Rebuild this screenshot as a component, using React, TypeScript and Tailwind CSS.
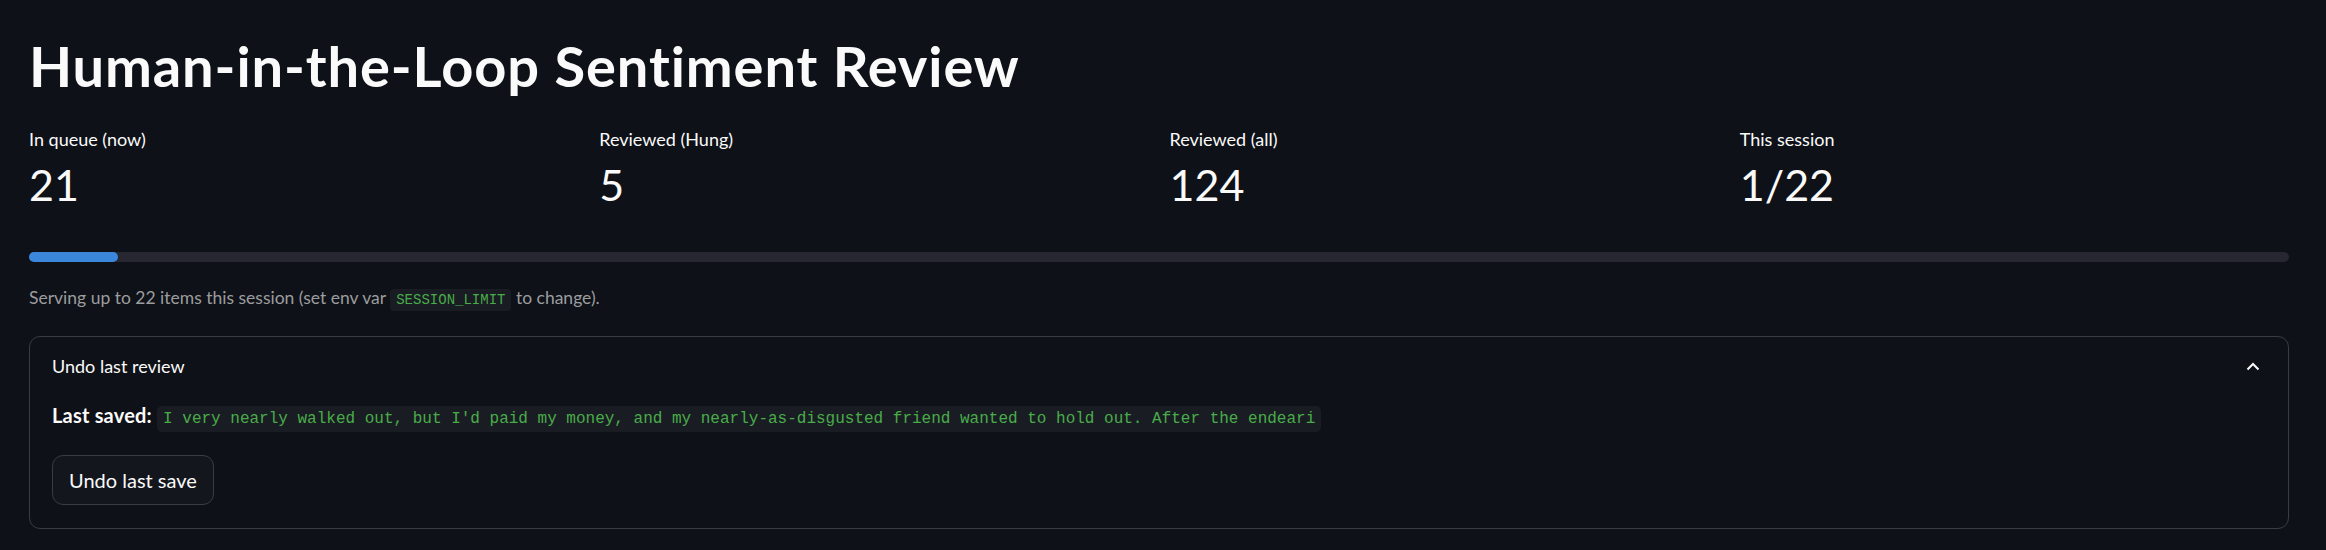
const metrics = [
  { label: "In queue (now)", value: "21" },
  { label: "Reviewed (Hung)", value: "5" },
  { label: "Reviewed (all)", value: "124" },
  { label: "This session", value: "1/22" },
];

const lastSaved =
  "I very nearly walked out, but I'd paid my money, and my nearly-as-disgusted friend wanted to hold out. After the endeari";

const ChevronUp = () => (
  <svg width="14" height="9" viewBox="0 0 14 9" fill="none">
    <path d="M1.5 7.5 L7 2 L12.5 7.5" stroke="#fafafa" strokeWidth="2" />
  </svg>
);

export default function App() {
  const sessionDone = 1;
  const sessionLimit = 22;
  const pct = (sessionDone / sessionLimit) * 87;

  return (
    <div className="min-h-screen w-full overflow-hidden bg-[#0e1117] pl-[29px] pr-[37px] font-['Lato',sans-serif] text-[#fafafa]">
      <h1 className="pt-[32px] text-[56px] font-bold leading-[67px] tracking-[0.9px]">
        Human-in-the-Loop Sentiment Review
      </h1>

      <div className="mt-[28px] grid grid-cols-4 gap-x-[21px]">
        {metrics.map((m) => (
          <div key={m.label} className="flex flex-col">
            <span className="text-[18px] leading-[24px]">{m.label}</span>
            <span className="mt-[8px] text-[43px] leading-[52px]">{m.value}</span>
          </div>
        ))}
      </div>

      <div className="mt-[41px] h-[10px] w-full rounded-full bg-[#262730]">
        <div
          className="h-full rounded-full bg-[#3b87db]"
          style={{ width: `${pct}%` }}
        />
      </div>

      <p className="mt-[24px] h-[24px] text-[17.5px] leading-[24px] text-[#9c9d9f]">
        Serving up to 22 items this session (set env var{" "}
        <code className="rounded-[4px] bg-[#1a1c24] px-[6px] py-[3px] font-['Liberation_Mono',monospace] text-[14px] leading-[14px] text-[#48ad48]">
          SESSION_LIMIT
        </code>{" "}
        to change).
      </p>

      <div className="mt-[26px] rounded-[11px] border border-[#3a3c41]">
        <div className="flex items-center justify-between pl-[22px] pr-[28px] pt-[17px]">
          <span className="text-[18px] leading-[24px]">Undo last review</span>
          <ChevronUp />
        </div>
        <div className="px-[22px] pb-[23px]">
          <div className="mt-[23px] h-[28px] text-[20px] leading-[28px]">
            <strong className="font-bold tracking-[0.2px]">Last saved:</strong>{" "}
            <code className="rounded-[5px] bg-[#1a1c24] px-[6px] py-[4px] font-['Liberation_Mono',monospace] text-[16px] leading-[16px] text-[#48ad48]">
              {lastSaved}
            </code>
          </div>
          <button className="mt-[26px] h-[50px] rounded-[11px] border border-[#3a3c41] bg-[#13161d] px-[16px] text-[20px]">
            Undo last save
          </button>
        </div>
      </div>

      <div className="mt-[21px] h-[80px] rounded-[11px] border border-[#3a3c41]" />
    </div>
  );
}
